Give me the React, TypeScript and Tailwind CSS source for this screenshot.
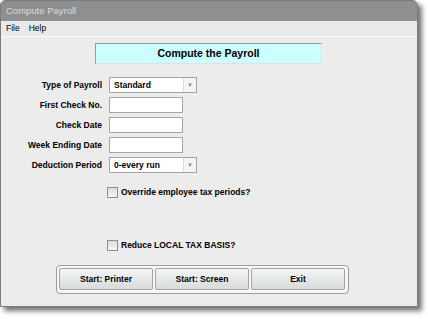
const font = "font-['Liberation_Sans',Arial,sans-serif]";

const Field = ({ label, children }: { label: string; children: React.ReactNode }) => (
  <>
    <div className="flex h-[16px] items-center justify-end text-[8.5px] font-bold text-black">{label}</div>
    <div className="flex h-[16px] items-center">{children}</div>
  </>
);

const TextBox = () => <div className="h-[16px] w-[74px] border border-[#a5a5a5] bg-white" />;

const Select = ({ value }: { value: string }) => (
  <div className="flex h-[16px] w-[88px] border border-[#a5a5a5] bg-white">
    <div className="flex flex-1 items-center pl-[4px] text-[8.5px] font-bold text-black">{value}</div>
    <div className="flex w-[13px] items-center justify-center border-l border-[#dcdcdc] bg-[#f4f4f4] text-[6px] text-[#909090]">
      ▼
    </div>
  </div>
);

const Check = ({ label }: { label: string }) => (
  <div className="flex items-center gap-[3px] pl-[106px]">
    <div className="h-[11px] w-[11px] border border-[#8e8e8e] bg-gradient-to-b from-[#dedede] to-[#f6f6f6]" />
    <span className="text-[8.5px] font-bold text-black">{label}</span>
  </div>
);

const Btn = ({ label }: { label: string }) => (
  <div className="flex h-[22px] w-[94px] items-center justify-center rounded-[2px] border border-[#a3a3a3] bg-gradient-to-b from-[#f4f4f4] to-[#d9dcdc] text-[8.5px] font-bold text-black">
    {label}
  </div>
);

export default function App() {
  return (
    <div className={`h-[319px] w-[428px] bg-white ${font}`}>
      <div className="flex h-[307px] w-[418px] flex-col overflow-hidden rounded-t-[5px] border border-[#7a7a7a] bg-[#ececec] shadow-[4px_4px_5px_rgba(0,0,0,0.55)]">
        <div className="flex h-[20px] shrink-0 items-center bg-[#8f8f8f] pl-[5px] text-[9.5px] text-[#dcdcdc]">
          Compute Payroll
        </div>
        <div className="flex h-[16px] shrink-0 items-center gap-[9px] border-b border-[#fafafa] bg-[#e9e9e9] pl-[5px] text-[8.5px] text-black">
          <span>File</span>
          <span>Help</span>
        </div>
        <div className="flex flex-col">
          <div className="ml-[94px] mt-[6px] flex h-[21px] w-[227px] items-center justify-center border border-t-[#9a9a9a] border-l-[#9a9a9a] border-r-[#e0e0e0] border-b-[#e0e0e0] bg-[#ccffff] text-[10.5px] font-bold text-black">
            Compute the Payroll
          </div>
          <div className="mt-[13px] grid grid-cols-[101px_auto] gap-x-[7px] gap-y-[4px]">
            <Field label="Type of Payroll">
              <Select value="Standard" />
            </Field>
            <Field label="First Check No.">
              <TextBox />
            </Field>
            <Field label="Check Date">
              <TextBox />
            </Field>
            <Field label="Week Ending Date">
              <TextBox />
            </Field>
            <Field label="Deduction Period">
              <Select value="0-every run" />
            </Field>
          </div>
          <div className="mt-[13px]">
            <Check label="Override employee tax periods?" />
          </div>
          <div className="mt-[40px]">
            <Check label="Reduce LOCAL TAX BASIS?" />
          </div>
          <div className="ml-[55px] mt-[13px] flex h-[29px] w-[293px] items-center gap-[2px] rounded-[4px] border border-[#9c9c9c] bg-[#f7f7f7] px-[2px]">
            <Btn label="Start: Printer" />
            <Btn label="Start: Screen" />
            <Btn label="Exit" />
          </div>
        </div>
      </div>
    </div>
  );
}
